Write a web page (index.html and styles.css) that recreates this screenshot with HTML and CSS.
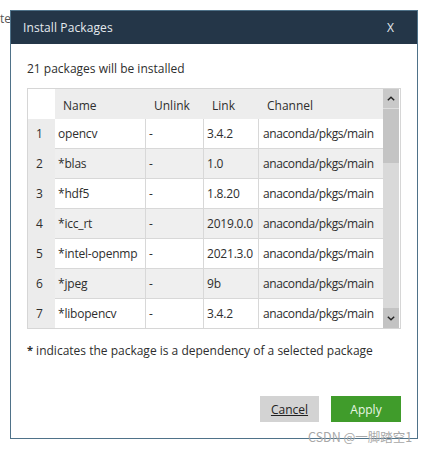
FILE: index.html
```html
<!DOCTYPE html>
<html>
<head>
<meta charset="utf-8">
<link rel="stylesheet" href="styles.css">
</head>
<body>
<div class="backdrop-text">te</div>
<div class="dialog">
  <div class="titlebar">
    <span class="title">Install Packages</span>
    <span class="close">X</span>
  </div>
  <div class="content">
    <p class="summary">21 packages will be installed</p>
    <div class="table-wrap">
      <div class="grid">
        <div class="row head">
          <div class="cell corner"></div>
          <div class="cell hcell">Name</div>
          <div class="cell hcell">Unlink</div>
          <div class="cell hcell">Link</div>
          <div class="cell hcell">Channel</div>
        </div>
        <div class="row">
          <div class="cell num">1</div>
          <div class="cell">opencv</div>
          <div class="cell">-</div>
          <div class="cell">3.4.2</div>
          <div class="cell last">anaconda/pkgs/main</div>
        </div>
        <div class="row alt">
          <div class="cell num">2</div>
          <div class="cell">*blas</div>
          <div class="cell">-</div>
          <div class="cell">1.0</div>
          <div class="cell last">anaconda/pkgs/main</div>
        </div>
        <div class="row">
          <div class="cell num">3</div>
          <div class="cell">*hdf5</div>
          <div class="cell">-</div>
          <div class="cell">1.8.20</div>
          <div class="cell last">anaconda/pkgs/main</div>
        </div>
        <div class="row alt">
          <div class="cell num">4</div>
          <div class="cell">*icc_rt</div>
          <div class="cell">-</div>
          <div class="cell">2019.0.0</div>
          <div class="cell last">anaconda/pkgs/main</div>
        </div>
        <div class="row">
          <div class="cell num">5</div>
          <div class="cell">*intel-openmp</div>
          <div class="cell">-</div>
          <div class="cell">2021.3.0</div>
          <div class="cell last">anaconda/pkgs/main</div>
        </div>
        <div class="row alt">
          <div class="cell num">6</div>
          <div class="cell">*jpeg</div>
          <div class="cell">-</div>
          <div class="cell">9b</div>
          <div class="cell last">anaconda/pkgs/main</div>
        </div>
        <div class="row">
          <div class="cell num">7</div>
          <div class="cell">*libopencv</div>
          <div class="cell">-</div>
          <div class="cell">3.4.2</div>
          <div class="cell last">anaconda/pkgs/main</div>
        </div>
      </div>
      <div class="scrollbar">
        <div class="sb-btn">
          <svg width="8" height="5" viewBox="0 0 8 5"><path d="M0.8 4.3 L4 1.2 L7.2 4.3" fill="none" stroke="#222" stroke-width="1.4"/></svg>
        </div>
        <div class="sb-thumb"></div>
        <div class="sb-track"></div>
        <div class="sb-btn down">
          <svg width="8" height="5" viewBox="0 0 8 5"><path d="M0.8 0.7 L4 3.8 L7.2 0.7" fill="none" stroke="#222" stroke-width="1.4"/></svg>
        </div>
      </div>
    </div>
    <p class="note"><b class="star">*</b> indicates the package is a dependency of a selected package</p>
    <div class="actions">
      <button class="btn cancel">Cancel</button>
      <button class="btn apply">Apply</button>
    </div>
  </div>
</div>
<div class="watermark">CSDN @一脚踏空1</div>
</body>
</html>
```

FILE: styles.css
```css
html, body {
  margin: 0;
  padding: 0;
}
body {
  width: 428px;
  height: 449px;
  overflow: hidden;
  background: #ffffff;
  font-family: "Open Sans", "Noto Sans", sans-serif;
  font-size: 12px;
  color: #333333;
  position: relative;
}
.backdrop-text {
  position: absolute;
  left: 0;
  top: 11px;
  font-size: 12px;
  line-height: 16px;
  color: #555;
}
.dialog {
  position: absolute;
  left: 10px;
  top: 10px;
  width: 408px;
  height: 429px;
  box-sizing: border-box;
  border: 1px solid #4f7289;
  background: #ffffff;
  display: flex;
  flex-direction: column;
}
.titlebar {
  height: 33px;
  background: #243648;
  color: #e4eaef;
  display: flex;
  align-items: center;
  justify-content: space-between;
  padding: 0 23px 0 12px;
  font-size: 12px;
  letter-spacing: 0.1px;
}
.close {
  font-size: 12px;
}
.content {
  padding: 0 16px;
  display: flex;
  flex-direction: column;
  flex: 1;
}
.summary {
  margin: 17px 0 11px 0;
  line-height: 16px;
  color: #2e2e2e;
}
.table-wrap {
  display: flex;
  border: 1px solid #d6d6d6;
  height: 239px;
  overflow: hidden;
}
.grid {
  width: 355px;
  display: flex;
  flex-direction: column;
}
.row {
  display: grid;
  grid-template-columns: 27px 91px 58px 55px 124px;
  height: 30px;
  flex: 0 0 30px;
  background: #ffffff;
}
.row.alt {
  background: #efefef;
}
.cell {
  box-sizing: border-box;
  display: flex;
  align-items: center;
  padding-left: 3px;
  border-right: 1px solid #d8d8d8;
  border-bottom: 1px solid #d8d8d8;
  white-space: nowrap;
  overflow: hidden;
  color: #2e2e2e;
  letter-spacing: -0.2px;
}
.cell.last {
  border-right: none;
  padding-left: 4px;
  letter-spacing: -0.4px;
}
.cell.num {
  background: #ececec;
  border-right: none;
  border-bottom: 1px solid #ececec;
  padding-left: 8px;
  letter-spacing: 0;
}
.row.head {
  background: #ededed;
}
.cell.corner {
  background: #ffffff;
  border: none;
}
.cell.hcell {
  border: none;
  padding-left: 8px;
  padding-top: 2px;
  letter-spacing: 0;
}
.scrollbar {
  width: 16px;
  display: flex;
  flex-direction: column;
  background: #dadada;
}
.sb-btn {
  height: 20px;
  flex: 0 0 20px;
  background: #c9c9c9;
  display: flex;
  align-items: center;
  justify-content: center;
  border-bottom: 1px solid #dedede;
  box-sizing: border-box;
}
.sb-btn.down {
  border-bottom: none;
  background: #c3c3c3;
}
.sb-thumb {
  height: 54px;
  flex: 0 0 54px;
  background: #c4c4c4;
}
.sb-track {
  flex: 1;
  background: #d9d9d9;
}
.note {
  margin: 13px 0 0 0;
  line-height: 16px;
  color: #2e2e2e;
}
.star {
  font-weight: bold;
  font-size: 11px;
  vertical-align: 1px;
}
.actions {
  margin-top: auto;
  margin-bottom: 16px;
  display: flex;
  justify-content: flex-end;
  gap: 12px;
}
.btn {
  height: 26px;
  border: none;
  font-family: "Open Sans", "Noto Sans", sans-serif;
  font-size: 12px;
  padding: 0;
  cursor: pointer;
}
.cancel {
  width: 59px;
  background: #d3d3d3;
  color: #222;
  text-decoration: underline;
}
.apply {
  width: 70px;
  background: #409c2b;
  color: #e9f6e4;
}
.watermark {
  position: absolute;
  left: 308px;
  top: 428px;
  font-family: "Noto Sans CJK SC", "Noto Sans", sans-serif;
  font-size: 12.5px;
  line-height: 17px;
  color: #a8a8a8;
  white-space: nowrap;
}
```
